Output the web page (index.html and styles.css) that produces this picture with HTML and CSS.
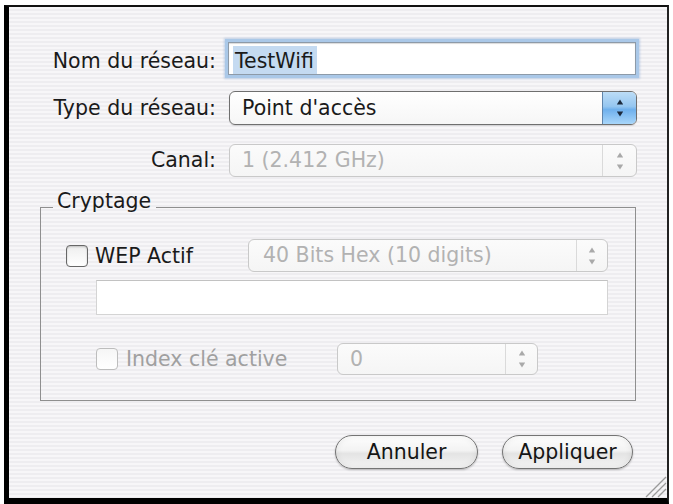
FILE: index.html
```html
<!DOCTYPE html>
<html lang="fr">
<head>
<meta charset="utf-8">
<title>Réseau</title>
<link rel="stylesheet" href="styles.css">
</head>
<body>
<div class="window">
  <div class="form">
    <div class="row row-name">
      <span class="lbl">Nom du réseau:</span>
      <div class="field focus"><span class="sel">TestWifi</span></div>
    </div>
    <div class="row row-type">
      <span class="lbl">Type du réseau:</span>
      <div class="popup active tall">
        <span class="val">Point d'accès</span>
        <span class="arrows"><svg width="8" height="20" viewBox="0 0 8 20"><polygon points="4,1.5 0.8,6.5 7.2,6.5"/><polygon points="0.8,13.5 7.2,13.5 4,18.5"/></svg></span>
      </div>
    </div>
    <div class="row row-canal">
      <span class="lbl">Canal:</span>
      <div class="popup disabled">
        <span class="val">1 (2.412 GHz)</span>
        <span class="arrows"><svg width="8" height="20" viewBox="0 0 8 20"><polygon points="4,1.5 0.8,6.5 7.2,6.5"/><polygon points="0.8,13.5 7.2,13.5 4,18.5"/></svg></span>
      </div>
    </div>
  </div>

  <div class="group">
    <div class="group-head"><span class="group-title">Cryptage</span></div>
    <div class="group-body">
      <div class="wep-row">
        <span class="check"></span>
        <span class="check-label">WEP Actif</span>
        <div class="popup disabled wep">
          <span class="val">40 Bits Hex (10 digits)</span>
          <span class="arrows"><svg width="8" height="20" viewBox="0 0 8 20"><polygon points="4,1.5 0.8,6.5 7.2,6.5"/><polygon points="0.8,13.5 7.2,13.5 4,18.5"/></svg></span>
        </div>
      </div>
      <div class="keyfield"></div>
      <div class="index-row">
        <span class="check off"></span>
        <span class="check-label dim">Index clé active</span>
        <div class="popup disabled idx">
          <span class="val">0</span>
          <span class="arrows"><svg width="8" height="20" viewBox="0 0 8 20"><polygon points="4,1.5 0.8,6.5 7.2,6.5"/><polygon points="0.8,13.5 7.2,13.5 4,18.5"/></svg></span>
        </div>
      </div>
    </div>
  </div>

  <div class="buttons">
    <button class="btn btn-cancel">Annuler</button>
    <button class="btn btn-apply">Appliquer</button>
  </div>

  <svg class="grip" width="24" height="24" viewBox="0 0 24 24">
    <line x1="23" y1="3" x2="3" y2="23"/>
    <line x1="23" y1="9" x2="9" y2="23"/>
    <line x1="23" y1="15" x2="15" y2="23"/>
  </svg>
</div>
</body>
</html>
```

FILE: styles.css
```css
html, body {
  margin: 0;
  padding: 0;
  background: #fff;
  overflow: hidden;
}

body {
  font-family: "DejaVu Sans", "Liberation Sans", sans-serif;
  font-size: 20.5px;
  color: #1a1a1a;
}

.window {
  position: relative;
  box-sizing: border-box;
  width: 665px;
  height: 499px;
  margin: 5px 0 0 4px;
  border-left: 5px solid #000;
  border-top: 2px solid #111;
  border-right: 2px solid #222;
  border-bottom: 6px solid #000;
  background: repeating-linear-gradient(to bottom, #f7f6f8 0, #f7f6f8 2px, #eeedf0 2px, #eeedf0 4px);
}

/* top form */
.form {
  padding-top: 35px;
}

.row {
  display: flex;
  align-items: baseline;
}

.row-type { margin-top: 16px; }
.row-canal { margin-top: 19px; }

.lbl {
  width: 207px;
  margin-right: 12px;
  text-align: right;
  line-height: 24px;
  white-space: nowrap;
}

.field {
  box-sizing: border-box;
  width: 408px;
  height: 33px;
  padding: 6px 0 0 4px;
  line-height: 24px;
  background: #fff;
  border: 1px solid #8d9aa8;
  overflow: hidden;
}

.field.focus {
  box-shadow: 0 0 0 3px #aac8e8, 0 0 2px 4px rgba(120, 160, 210, 0.4), inset 0 1px 1px rgba(0,0,0,0.15);
}

.sel {
  background: #c4daf1;
  padding: 3px 3px 3px 2px;
}

/* popups */
.popup {
  box-sizing: border-box;
  display: flex;
  width: 408px;
  height: 33px;
  margin-left: 1px;
  border: 1px solid #8b8b8b;
  border-radius: 6px;
  background: linear-gradient(#ffffff, #f6f6f6);
  box-shadow: 0 1px 1px rgba(0,0,0,0.12);
  overflow: hidden;
}

.popup.tall { height: 34px; }

.popup .val {
  flex: 1;
  padding-left: 12px;
  line-height: 31px;
  white-space: nowrap;
}

.popup.tall .val { line-height: 32px; }

.popup .arrows {
  width: 33px;
  display: flex;
  align-items: center;
  justify-content: center;
  border-left: 1px solid #c4c4c4;
}

.popup.active {
  border-color: #6f6f6f;
}

.popup.active .arrows {
  border-left-color: #5f84aa;
  background: linear-gradient(#bcdcf6 0%, #95c6f0 45%, #6fb0ec 55%, #a8d6fa 100%);
}

.popup.active svg { fill: #1c2a3c; }

.popup.disabled {
  border-color: #c9c9c9;
  background: linear-gradient(#fbfbfb, #f5f5f5);
  box-shadow: none;
  color: #b2b2b2;
}

.popup.disabled .arrows { border-left-color: #dadada; }
.popup.disabled svg { fill: #a9a9a9; }

/* group box */
.group {
  width: 596px;
  margin: 12px 0 0 31px;
}

.group-head {
  display: flex;
  align-items: flex-end;
}

.group-head::before,
.group-head::after {
  content: "";
  height: 1px;
  background: #8f8f8f;
}

.group-head::before { width: 13px; }
.group-head::after { flex: 1; }

.group-title {
  padding: 0 5px 0 4px;
  line-height: 24px;
  margin-bottom: -5px;
}

.group-body {
  border: 1px solid #8f8f8f;
  border-top: none;
  padding: 31px 0 25px 0;
}

.wep-row {
  display: flex;
  align-items: center;
  height: 33px;
  padding-left: 25px;
  padding-right: 27px;
}

.check {
  box-sizing: border-box;
  width: 22px;
  height: 22px;
  border: 1px solid #676767;
  border-radius: 4px;
  background: linear-gradient(#eeeeee, #ffffff);
  box-shadow: inset 0 1px 2px rgba(0,0,0,0.2);
}

.check.off {
  border-color: #bdbdbd;
  box-shadow: none;
  background: linear-gradient(#f6f6f6, #ffffff);
}

.check-label {
  margin-left: 7px;
  line-height: 24px;
  white-space: nowrap;
}

.check-label.dim {
  margin-left: 8px;
  width: 211px;
  color: #a0a0a0;
}

.popup.wep {
  width: 360px;
  margin-left: auto;
}

.popup.wep .val { padding-left: 14px; }
.popup.wep .arrows { width: 30px; }

.keyfield {
  box-sizing: border-box;
  width: 512px;
  height: 35px;
  margin: 8px 0 0 55px;
  background: #fff;
  border: 1px solid #d4d4d4;
  border-top-color: #c2c2c2;
}

.index-row {
  display: flex;
  align-items: center;
  height: 32px;
  margin-top: 28px;
  padding-left: 55px;
}

.popup.idx {
  width: 201px;
  height: 32px;
  margin-left: 0;
}

.popup.idx .val { line-height: 30px; }
.popup.idx .arrows { width: 31px; }

/* buttons */
.buttons {
  display: flex;
  justify-content: flex-end;
  gap: 24px;
  margin-top: 34px;
  padding-right: 34px;
}

.btn {
  box-sizing: border-box;
  height: 34px;
  padding: 0;
  font-family: "DejaVu Sans", "Liberation Sans", sans-serif;
  font-size: 20.5px;
  line-height: 32px;
  color: #151515;
  border: 1px solid #747474;
  border-radius: 17px;
  background: linear-gradient(#fefefe 0%, #f3f3f3 45%, #e4e4e4 55%, #f4f4f4 100%);
  box-shadow: 0 1px 2px rgba(0,0,0,0.25), inset 0 0 6px rgba(0,0,0,0.08);
}

.btn-cancel { width: 143px; }
.btn-apply { width: 131px; }

.grip {
  position: absolute;
  right: 0;
  bottom: 0;
  stroke: #9a9a9a;
  stroke-width: 1.2;
}
```
